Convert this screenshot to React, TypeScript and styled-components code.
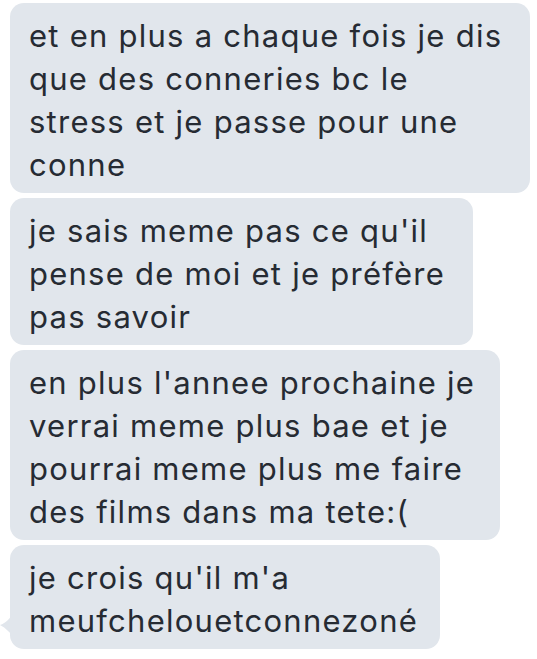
import React from "react";
import styled, { createGlobalStyle } from "styled-components";

const Global = createGlobalStyle`
  html, body { margin: 0; padding: 0; background: #ffffff; }
  body { font-family: Inter, "Noto Sans", sans-serif; }
`;

const Thread = styled.div`
  display: flex;
  flex-direction: column;
  align-items: flex-start;
  gap: 5px;
  padding: 3px 0 0 10px;
  width: 537px;
  height: 659px;
  box-sizing: border-box;
  overflow: hidden;
`;

const Bubble = styled.div<{ $w: number }>`
  position: relative;
  box-sizing: border-box;
  width: ${(p) => p.$w}px;
  background: #e1e6ec;
  border-radius: 14px;
  padding: 11px 10px 7px 19px;
  color: #262b33;
  font-family: Inter, "Noto Sans", sans-serif;
  font-size: 31px;
  line-height: 43px;
  letter-spacing: 1.25px;
  white-space: nowrap;
`;

const Tail = styled.svg`
  position: absolute;
  left: -10px;
  bottom: 12px;
  width: 14px;
  height: 26px;
`;

const messages: { w: number; lines: string[]; tail?: boolean }[] = [
  {
    w: 520,
    lines: [
      "et en plus a chaque fois je dis",
      "que des conneries bc le",
      "stress et je passe pour une",
      "conne",
    ],
  },
  {
    w: 463,
    lines: ["je sais meme pas ce qu'il", "pense de moi et je préfère", "pas savoir"],
  },
  {
    w: 490,
    lines: [
      "en plus l'annee prochaine je",
      "verrai meme plus bae et je",
      "pourrai meme plus me faire",
      "des films dans ma tete:(",
    ],
  },
  {
    w: 430,
    lines: ["je crois qu'il m'a", "meufchelouetconnezoné"],
    tail: true,
  },
];

export default function App() {
  return (
    <>
      <Global />
      <Thread>
        {messages.map((m, i) => (
          <Bubble key={i} $w={m.w}>
            {m.lines.map((l, j) => (
              <React.Fragment key={j}>
                {l}
                {j < m.lines.length - 1 && <br />}
              </React.Fragment>
            ))}
            {m.tail && (
              <Tail viewBox="0 0 14 26">
                <path d="M14 0 L14 26 C10 22 6 17 0 14 C6 12 10 8 14 0 Z" fill="#e1e6ec" />
              </Tail>
            )}
          </Bubble>
        ))}
      </Thread>
    </>
  );
}
